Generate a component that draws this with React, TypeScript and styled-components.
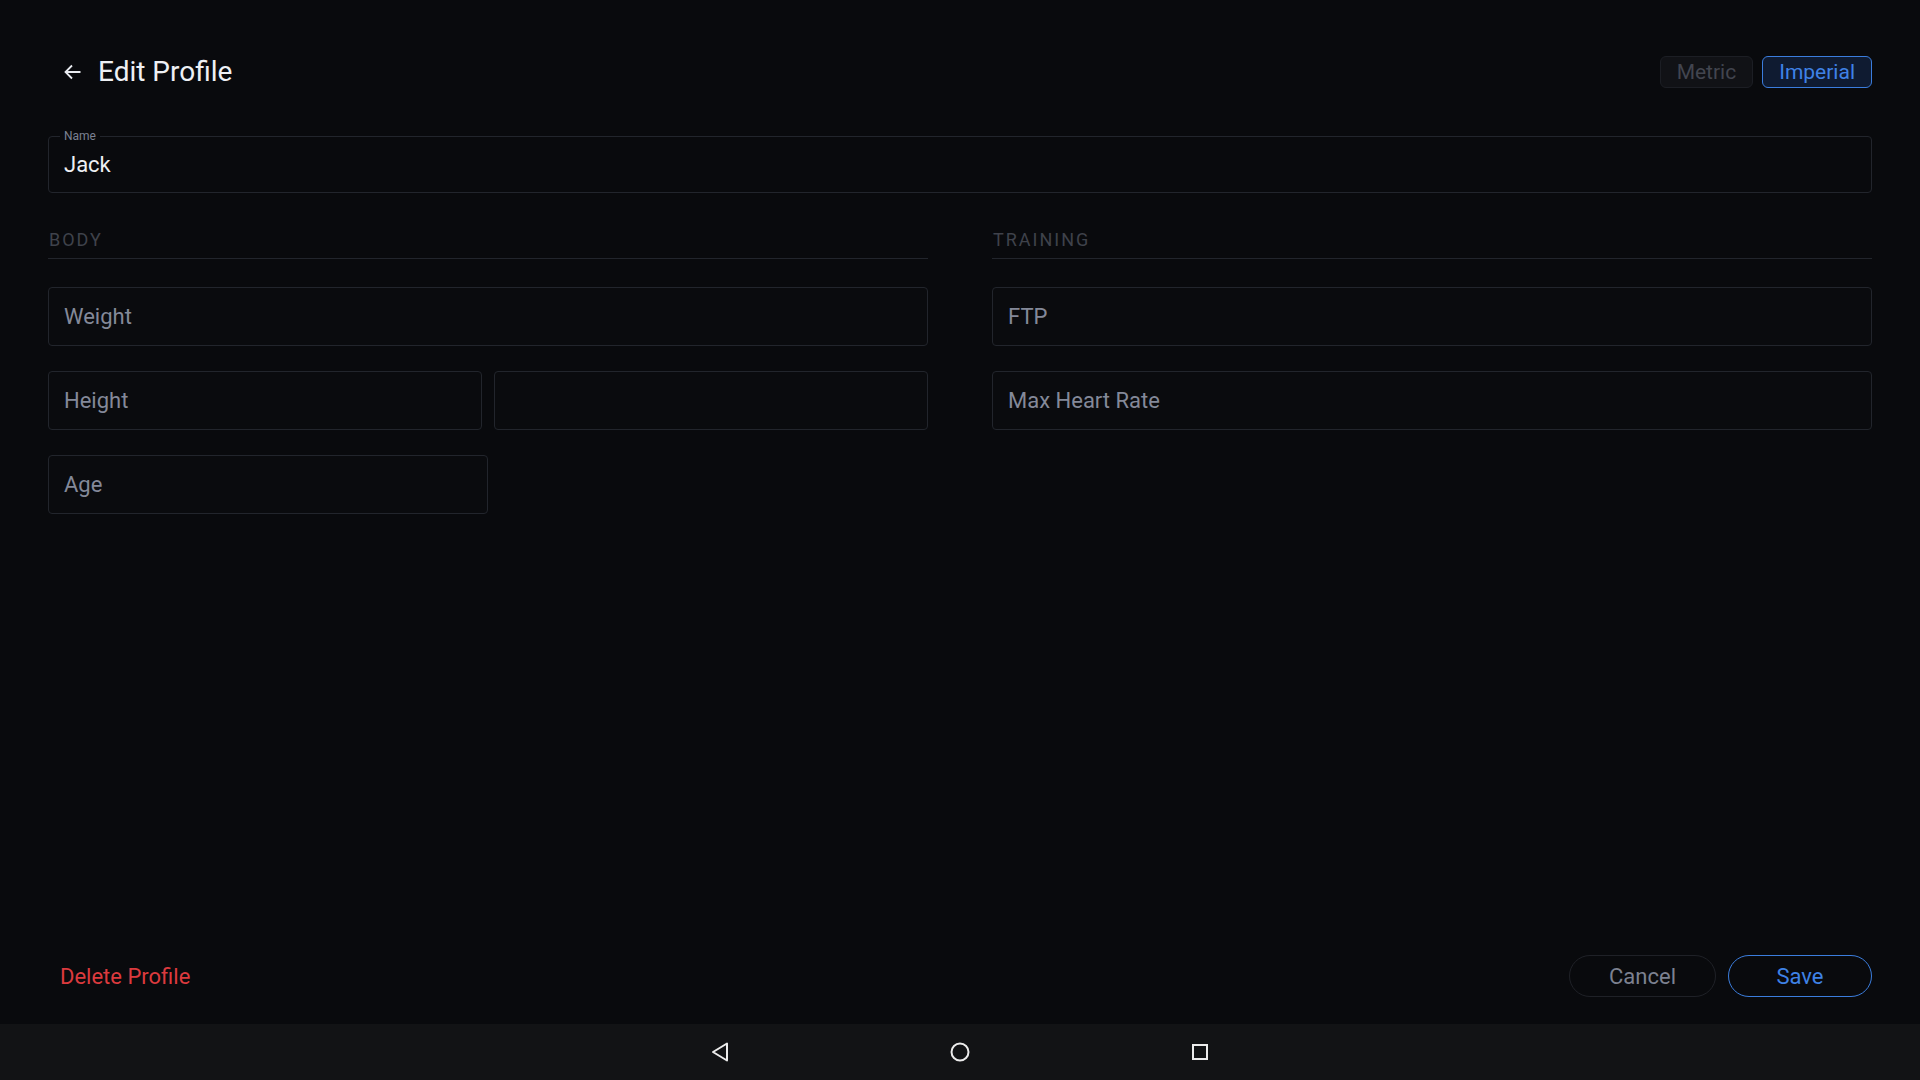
import React from "react";
import styled, { createGlobalStyle } from "styled-components";

const GlobalStyle = createGlobalStyle`
  html, body {
    margin: 0;
    padding: 0;
    background: #090a0d;
  }
  body {
    font-family: Roboto, "Noto Sans", sans-serif;
    -webkit-font-smoothing: antialiased;
  }
  * {
    box-sizing: border-box;
  }
`;

const Screen = styled.div`
  width: 1920px;
  height: 1080px;
  display: flex;
  flex-direction: column;
  background: #090a0d;
  color: #e9ebf0;
`;

const Main = styled.main`
  flex: 1;
  padding: 56px 48px 0;
`;

const Header = styled.header`
  height: 32px;
  display: flex;
  align-items: center;
  justify-content: space-between;
`;

const TitleGroup = styled.div`
  display: flex;
  align-items: center;
  gap: 17px;
  padding-left: 16px;
`;

const BackButton = styled.button`
  display: flex;
  align-items: center;
  padding: 0;
  background: none;
  border: none;
  color: #e9ebf0;
  cursor: pointer;
`;

const Title = styled.h1`
  margin: 0;
  font-size: 28px;
  font-weight: 400;
  line-height: 34px;
  color: #eef0f4;
`;

const UnitToggle = styled.div`
  display: flex;
  gap: 9px;
`;

const UnitButton = styled.button<{ $active?: boolean }>`
  height: 32px;
  padding: 0 16px;
  border-radius: 6px;
  font-family: Roboto, sans-serif;
  font-size: 21px;
  line-height: 30px;
  cursor: pointer;
  border: 1px solid ${(p) => (p.$active ? "#3b7ddd" : "#1c1e24")};
  background: ${(p) => (p.$active ? "#0f1b31" : "#111216")};
  color: ${(p) => (p.$active ? "#3f82e6" : "#42454f")};
`;

const NameBox = styled.div`
  position: relative;
  margin-top: 48px;
  height: 57px;
  border: 1px solid #22252c;
  border-radius: 4px;
  display: flex;
  align-items: center;
  padding: 0 15px;
`;

const FloatingLabel = styled.span`
  position: absolute;
  top: -8px;
  left: 11px;
  padding: 0 4px;
  background: #090a0d;
  font-size: 12px;
  line-height: 14px;
  color: #7b8192;
`;

const NameValue = styled.span`
  font-size: 22px;
  color: #eef0f4;
`;

const Columns = styled.div`
  margin-top: 36px;
  display: grid;
  grid-template-columns: 1fr 1fr;
  gap: 64px;
`;

const Section = styled.section`
  display: grid;
  align-content: start;
  row-gap: 25px;
`;

const SectionTitle = styled.h2`
  margin: 0 0 3px;
  padding: 0 1px 7px;
  font-size: 18px;
  line-height: 22px;
  font-weight: 400;
  letter-spacing: 2px;
  color: #3f424b;
  border-bottom: 1px solid #22252c;
`;

const Row = styled.div`
  display: grid;
  grid-template-columns: 1fr 1fr;
  gap: 12px;
`;

const Field = styled.div<{ $width?: number }>`
  height: 59px;
  width: ${(p) => (p.$width ? `${p.$width}px` : "auto")};
  justify-self: ${(p) => (p.$width ? "start" : "stretch")};
  border: 1px solid #22252c;
  border-radius: 4px;
  background: #0a0b0e;
  display: flex;
  align-items: center;
  padding: 0 15px;
  font-size: 22px;
  color: #848999;
`;

const Actions = styled.div`
  display: flex;
  align-items: center;
  justify-content: space-between;
  padding: 0 48px 27px;
`;

const DangerButton = styled.button`
  padding: 0 12px;
  height: 42px;
  background: none;
  border: none;
  font-family: Roboto, sans-serif;
  font-size: 22px;
  color: #dc3a3e;
  cursor: pointer;
`;

const ButtonGroup = styled.div`
  display: flex;
  gap: 12px;
`;

const PillButton = styled.button<{ $primary?: boolean; $width: number }>`
  width: ${(p) => p.$width}px;
  height: 42px;
  border-radius: 21px;
  background: transparent;
  font-family: Roboto, sans-serif;
  font-size: 22px;
  cursor: pointer;
  border: 1px solid ${(p) => (p.$primary ? "#3b7ddd" : "#1f2127")};
  color: ${(p) => (p.$primary ? "#3f82e6" : "#7c8190")};
`;

const NavBar = styled.nav`
  height: 56px;
  background: #121315;
  display: flex;
  align-items: center;
  justify-content: center;
  gap: 220px;
`;

const NavIcon = styled.span`
  width: 20px;
  height: 20px;
  display: flex;
  align-items: center;
  justify-content: center;
`;

export default function App() {
  return (
    <>
      <GlobalStyle />
      <Screen>
        <Main>
          <Header>
            <TitleGroup>
              <BackButton aria-label="Back">
                <svg width="17" height="16" viewBox="0 0 17 16" fill="none">
                  <path
                    d="M16.5 8H1.5M8 1.5L1.5 8L8 14.5"
                    stroke="#e9ebf0"
                    strokeWidth="1.8"
                  />
                </svg>
              </BackButton>
              <Title>Edit Profile</Title>
            </TitleGroup>
            <UnitToggle>
              <UnitButton>Metric</UnitButton>
              <UnitButton $active>Imperial</UnitButton>
            </UnitToggle>
          </Header>

          <NameBox>
            <FloatingLabel>Name</FloatingLabel>
            <NameValue>Jack</NameValue>
          </NameBox>

          <Columns>
            <Section>
              <SectionTitle>BODY</SectionTitle>
              <Field>Weight</Field>
              <Row>
                <Field>Height</Field>
                <Field />
              </Row>
              <Field $width={440}>Age</Field>
            </Section>
            <Section>
              <SectionTitle>TRAINING</SectionTitle>
              <Field>FTP</Field>
              <Field>Max Heart Rate</Field>
            </Section>
          </Columns>
        </Main>

        <Actions>
          <DangerButton>Delete Profile</DangerButton>
          <ButtonGroup>
            <PillButton $width={147}>Cancel</PillButton>
            <PillButton $primary $width={144}>
              Save
            </PillButton>
          </ButtonGroup>
        </Actions>

        <NavBar>
          <NavIcon>
            <svg width="18" height="20" viewBox="0 0 18 20" fill="none">
              <path d="M16 1.5V18.5L2 10Z" stroke="#ececec" strokeWidth="2" strokeLinejoin="round" />
            </svg>
          </NavIcon>
          <NavIcon>
            <svg width="20" height="20" viewBox="0 0 20 20" fill="none">
              <circle cx="10" cy="10" r="8.5" stroke="#ececec" strokeWidth="2" />
            </svg>
          </NavIcon>
          <NavIcon>
            <svg width="18" height="18" viewBox="0 0 18 18" fill="none">
              <rect x="2" y="2" width="14" height="14" stroke="#ececec" strokeWidth="2" />
            </svg>
          </NavIcon>
        </NavBar>
      </Screen>
    </>
  );
}
